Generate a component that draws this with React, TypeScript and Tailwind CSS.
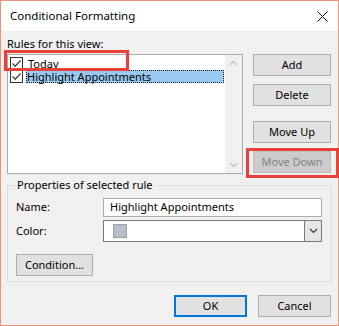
import React from "react";

const font = { fontFamily: '"Noto Sans", "Open Sans", sans-serif' };

function Check() {
  return (
    <span className="w-[13px] h-[13px] border border-[#333333] bg-white flex items-center justify-center shrink-0">
      <svg width="11" height="11" viewBox="0 0 11 11">
        <path d="M1.5 5.5 L4.2 8.2 L9.5 2.5" stroke="#444" strokeWidth="1.3" fill="none" />
      </svg>
    </span>
  );
}

function Btn({ children, disabled, className = "" }: { children: React.ReactNode; disabled?: boolean; className?: string }) {
  return (
    <div
      className={
        "h-[22px] flex items-center justify-center border text-[11px] " +
        (disabled
          ? "bg-[#cccccc] border-[#bfbfbf] text-[#838383] "
          : "bg-[#e1e1e1] border-[#adadad] text-black ") +
        className
      }
    >
      {children}
    </div>
  );
}

export default function App() {
  return (
    <div className="w-[339px] h-[326px] border border-[#e8957a] flex flex-col bg-[#f0f0f0] text-[11px] text-black" style={font}>
      <div className="h-[30px] bg-white flex items-center justify-between pl-[9px] pr-[10px] shrink-0">
        <span className="text-[11.5px]">Conditional Formatting</span>
        <svg width="11" height="11" viewBox="0 0 11 11">
          <path d="M0.5 0.5 L10.5 10.5 M10.5 0.5 L0.5 10.5" stroke="#111" strokeWidth="1" />
        </svg>
      </div>
      <div className="flex-1 flex flex-col px-[6px] pt-[5px]">
        <div className="flex">
          <div className="w-[236px] flex flex-col relative">
            <div className="h-[16px] leading-[16px]">Rules for this view:</div>
            <div className="mt-[2px] h-[120px] border border-[#ababab] bg-white flex">
              <div className="flex-1 flex flex-col pt-[2px] pl-[2px]">
                <div className="h-[13px] flex items-center gap-[5px]">
                  <Check />
                  <span className="leading-[13px]">Today</span>
                </div>
                <div className="h-[13px] flex items-center gap-[3px]">
                  <Check />
                  <span className="flex-1 h-[13px] leading-[11px] bg-[#99c9ef] border border-dotted border-[#222] mr-[1px]">
                    Highlight Appointments
                  </span>
                </div>
              </div>
              <div className="w-[17px] bg-[#f0f0f0] flex flex-col items-center justify-between py-[5px]">
                <svg width="9" height="6" viewBox="0 0 9 6">
                  <path d="M1 5 L4.5 1.5 L8 5" stroke="#c2c2c2" strokeWidth="1.3" fill="none" />
                </svg>
                <svg width="9" height="6" viewBox="0 0 9 6">
                  <path d="M1 1 L4.5 4.5 L8 1" stroke="#c2c2c2" strokeWidth="1.3" fill="none" />
                </svg>
              </div>
            </div>
            <div className="absolute left-[-3px] top-[14px] w-[125px] h-[21px] border-[3px] border-[#e8413a]" />
          </div>
          <div className="ml-[10px] w-[78px] flex flex-col pt-[18px] relative">
            <Btn>Add</Btn>
            <Btn className="mt-[8px]">Delete</Btn>
            <Btn className="mt-[15px]">Move Up</Btn>
            <Btn disabled className="mt-[8px]">Move Down</Btn>
            <div className="absolute left-[-7px] top-[112px] w-[93px] h-[30px] border-[3px] border-[#e8413a]" />
          </div>
        </div>
        <fieldset className="mt-[3px] w-[325px] border border-[#dcdcdc] px-0 pb-[5px] min-w-0">
          <legend className="ml-[7px] px-[2px] leading-[16px]">Properties of selected rule</legend>
          <div className="px-[8px]">
            <div className="flex items-center mt-[5px]">
              <span className="w-[87px]">Name:</span>
              <div className="w-[219px] h-[19px] border border-[#ababab] bg-white flex items-center pl-[6px]">
                Highlight Appointments
              </div>
            </div>
            <div className="flex items-center mt-[3px]">
              <span className="w-[87px]">Color:</span>
              <div className="w-[219px] h-[22px] border border-[#7a7a7a] bg-white flex items-center">
                <div className="flex-1 pl-[9px] flex items-center">
                  <span className="w-[14px] h-[14px] bg-[#b9bfca] border border-[#98a0ab]" />
                </div>
                <div className="w-[17px] h-full bg-[#e5e5e5] border-l border-[#7a7a7a] flex items-center justify-center">
                  <svg width="9" height="6" viewBox="0 0 9 6">
                    <path d="M1 1 L4.5 4.5 L8 1" stroke="#333" strokeWidth="1.1" fill="none" />
                  </svg>
                </div>
              </div>
            </div>
            <Btn className="mt-[12px] w-[77px]">Condition...</Btn>
          </div>
        </fieldset>
        <div className="flex justify-end gap-[11px] mt-[13px] pr-[1px]">
          <div className="w-[73px] h-[22px] flex items-center justify-center border-2 border-[#0078d7] bg-[#e1e1e1]">OK</div>
          <Btn className="w-[73px]">Cancel</Btn>
        </div>
      </div>
    </div>
  );
}
